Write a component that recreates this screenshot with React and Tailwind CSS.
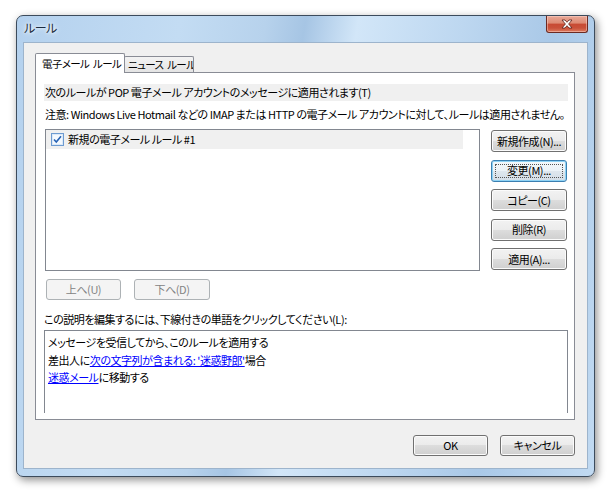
import React from "react";

const font = "[font-family:'Noto_Sans_CJK_JP',sans-serif] [font-feature-settings:'palt'] tracking-[-0.45px]";

function Btn({ children, w = "w-[76px]", h = "h-[22px]", variant = "normal" }) {
  if (variant === "disabled") {
    return (
      <div className={`${w} ${h} rounded-[3px] border border-[#adb2b5] bg-[#f4f4f4] flex items-center justify-center text-[#838383] text-[11px] leading-none whitespace-nowrap`}>
        {children}
      </div>
    );
  }
  if (variant === "focus") {
    return (
      <div className={`${w} ${h} relative rounded-[3px] border border-[#3c7fb1] bg-[linear-gradient(#f4f8fb_0%,#ecf2f7_50%,#dfe7ee_50%,#d3dde7_100%)] shadow-[inset_0_0_0_1px_#8fd3f5] flex items-center justify-center text-black text-[11px] leading-none whitespace-nowrap`}>
        <div className="absolute inset-[3px] border border-dotted border-[#555]"></div>
        <span className="relative">{children}</span>
      </div>
    );
  }
  return (
    <div className={`${w} ${h} rounded-[3px] border border-[#707070] bg-[linear-gradient(#f2f2f2_0%,#ebebeb_50%,#dddddd_50%,#cfcfcf_100%)] shadow-[inset_0_0_0_1px_#fbfbfb] flex items-center justify-center text-black text-[11px] leading-none whitespace-nowrap`}>
      {children}
    </div>
  );
}

function Check() {
  return (
    <svg width="13" height="13" viewBox="0 0 13 13" className="shrink-0">
      <rect x="0.5" y="0.5" width="12" height="12" fill="#f4f9fe" stroke="#6d9bd1" />
      <rect x="1.5" y="1.5" width="10" height="10" fill="none" stroke="#dbe9f8" />
      <path d="M3 6.5 L5.3 9 L10 3.2" fill="none" stroke="#2763b5" strokeWidth="1.6" />
    </svg>
  );
}

export default function App() {
  return (
    <div className={`w-[614px] h-[494px] bg-white overflow-hidden pt-[15px] pl-[16px] ${font}`}>
      <div className="w-[579px] h-[462px] rounded-[7px] border border-[#3c4b5c] shadow-[2px_3px_9px_rgba(0,0,0,0.45)] bg-[linear-gradient(100deg,#b4d1ee_0%,#c3dcf3_25%,#b7d2ec_38%,#a6c5e4_44%,#d2e6f8_52%,#bdd7f0_68%,#a9c8e7_82%,#c1daf2_100%)] flex flex-col px-[6px] pb-[7px]">
        {/* title bar */}
        <div className="h-[26px] flex items-start justify-between">
          <div className="pt-[4px] pl-[1px] text-[12px] leading-[16px] text-[#1b2c40] [text-shadow:0_0_6px_#fff,0_0_3px_#fff]">ルール</div>
          <div className="w-[42px] h-[17px] rounded-b-[3px] border border-[#6b2a22] border-t-0 bg-[linear-gradient(#e9a897_0%,#dd8a73_45%,#c84a33_50%,#c9513a_75%,#dd7c60_100%)] shadow-[inset_0_0_0_1px_rgba(255,220,210,0.45)] flex items-center justify-center">
            <svg width="12" height="10" viewBox="0 0 12 10">
              <path d="M1 1 H4 L6 3.3 L8 1 H11 L7.6 5 L11 9 H8 L6 6.7 L4 9 H1 L4.4 5 Z" fill="#fff" stroke="#5a2019" strokeWidth="0.8" strokeLinejoin="round" />
            </svg>
          </div>
        </div>
        {/* client area */}
        <div className="flex-1 border border-[#9db4cc] bg-[#f0f0f0] flex flex-col pt-[10px] pl-[11px] pr-[12px] text-[11px] text-black">
          {/* tabs */}
          <div className="h-[19px] flex items-end relative z-10">
            <div className="w-[90px] h-[20px] -mb-px bg-white border border-b-0 border-[#898c95] rounded-t-[2px] pl-[6px] pt-[1px] text-[10.5px] tracking-[-0.6px] [word-spacing:2px] leading-[17px] whitespace-nowrap overflow-hidden">
              電子メール ルール
            </div>
            <div className="w-[70px] h-[16px] -ml-px bg-[linear-gradient(#f3f3f3,#e4e4e4)] border border-b-0 border-[#898c95] rounded-t-[2px] pl-[3px] text-[10.5px] tracking-[-0.6px] [word-spacing:2px] leading-[15px] whitespace-nowrap overflow-hidden">
              ニュース ルール
            </div>
          </div>
          {/* tab panel */}
          <div className="w-[540px] h-[348px] border border-[#898c95] bg-white flex flex-col pl-[8px] pr-[6px]">
            <div className="mt-[11px] h-[17px] bg-[#f0f0f0] pl-[1px] leading-[17px] whitespace-nowrap">
              次のルールが POP 電子メール アカウントのメッセージに適用されます(T)
            </div>
            <div className="mt-[5px] h-[17px] pl-[1px] leading-[17px] whitespace-nowrap">
              注意: Windows Live Hotmail などの IMAP または HTTP の電子メール アカウントに対して、ルールは適用されません。
            </div>
            <div className="mt-[6px] flex items-start">
              <div className="ml-[1px] w-[435px] h-[142px] border border-[#828790] bg-white">
                <div className="w-[417px] h-[19px] bg-[#f0f0f0] flex items-center pl-[5px] gap-[4px]">
                  <Check />
                  <span className="leading-[17px] whitespace-nowrap">新規の電子メール ルール #1</span>
                </div>
              </div>
              <div className="ml-[11px] mt-[1px] flex flex-col gap-[7.5px]">
                <Btn>新規作成(N)...</Btn>
                <Btn variant="focus">変更(M)...</Btn>
                <Btn>コピー(C)</Btn>
                <Btn>削除(R)</Btn>
                <Btn>適用(A)...</Btn>
              </div>
            </div>
            <div className="mt-[8px] ml-[2px] flex gap-[13px]">
              <Btn variant="disabled" w="w-[75px]" h="h-[21px]">上へ(U)</Btn>
              <Btn variant="disabled" w="w-[76px]" h="h-[21px]">下へ(D)</Btn>
            </div>
            <div className="mt-[11px] h-[17px] leading-[17px] whitespace-nowrap">
              この説明を編集するには、下線付きの単語をクリックしてください(L):
            </div>
            <div className="mt-[2px] mb-[6px] flex-1 border border-b-0 border-[#828790] bg-white pl-[3px] pt-[3px] leading-[17.5px] whitespace-nowrap">
              <div>メッセージを受信してから、このルールを適用する</div>
              <div>
                差出人に<span className="text-[#0000ff] underline">次の文字列が含まれる: '迷惑野郎'</span>場合
              </div>
              <div>
                <span className="text-[#0000ff] underline">迷惑メール</span>に移動する
              </div>
            </div>
          </div>
          {/* bottom buttons */}
          <div className="mt-[15px] flex justify-end gap-[12px]">
            <Btn w="w-[75px]" h="h-[21px]">OK</Btn>
            <Btn w="w-[75px]" h="h-[21px]">キャンセル</Btn>
          </div>
        </div>
      </div>
    </div>
  );
}
